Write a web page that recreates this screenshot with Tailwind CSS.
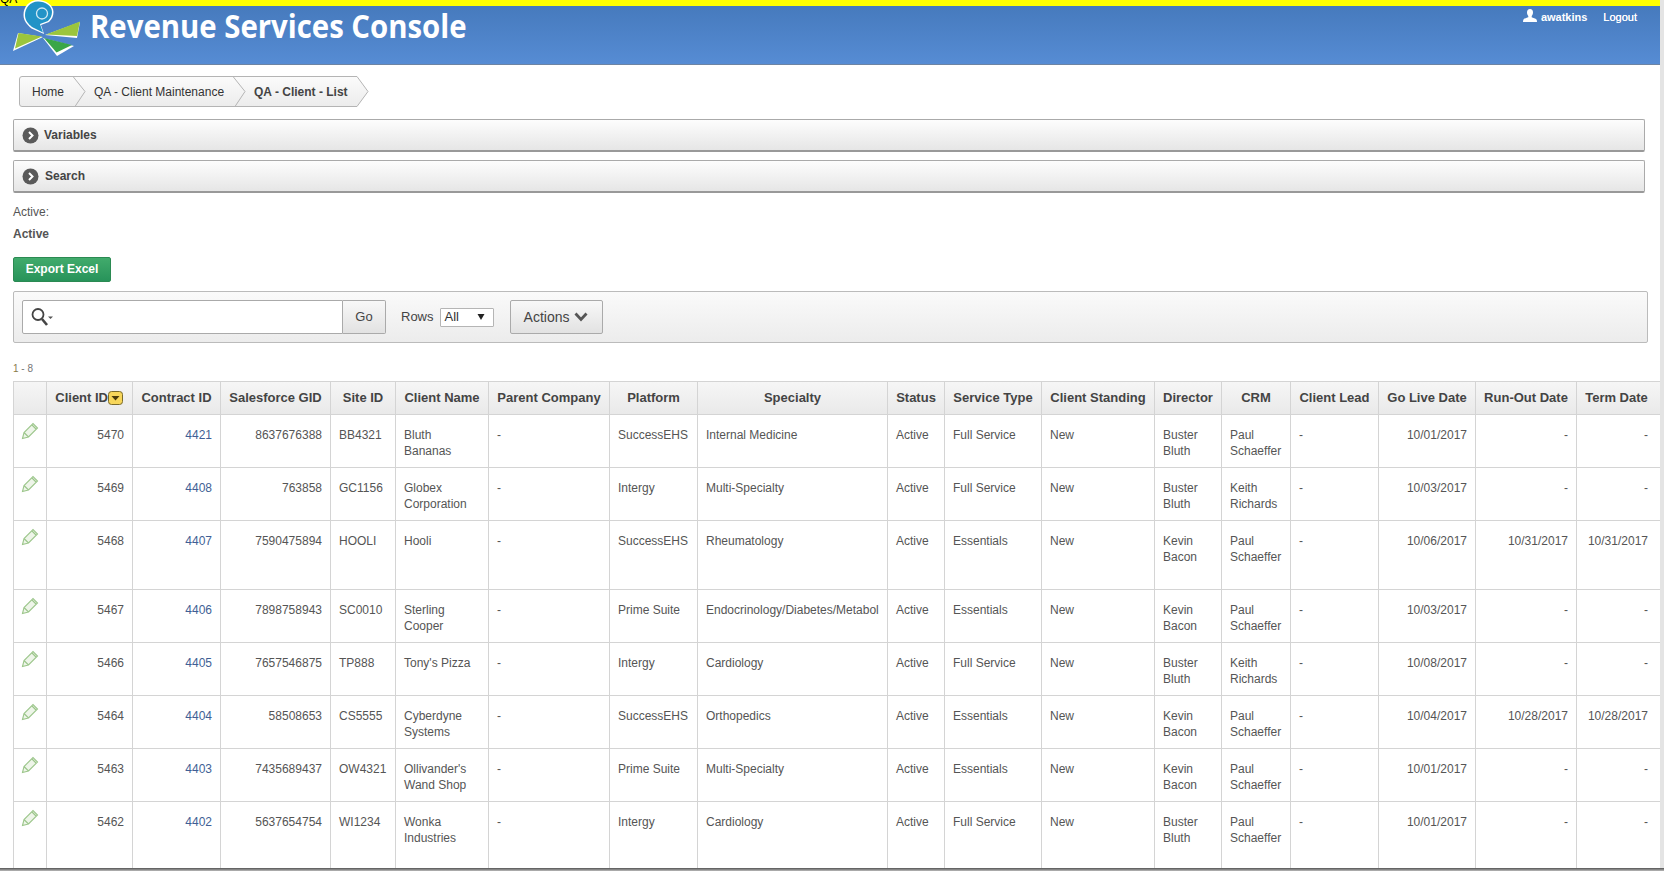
<!DOCTYPE html>
<html><head><meta charset="utf-8"><title>Revenue Services Console</title>
<script src="https://cdn.jsdelivr.net/npm/@tailwindcss/browser@4"></script></head>
<body class="bg-white overflow-hidden font-['Liberation_Sans',Arial,sans-serif] text-[12px] text-[#444]">
<div class="relative flex w-[1664px] h-[871px] overflow-hidden">
<main class="w-[1660px] shrink-0">
  <div class="h-[6px] bg-[#ffff00] overflow-hidden text-black text-[12px] leading-[6px]"><span class="relative top-[-6px] block leading-[10px]">QA</span></div>
  <header class="h-[59px] bg-gradient-to-b from-[#467abd] to-[#568cd4] border-b border-[#6d84a3] flex items-start justify-between pl-[90px] pr-[23px]">
    <h1 class="font-['Open_Sans',sans-serif] font-bold text-white text-[32px] leading-[39px] origin-left scale-x-[0.917]">Revenue Services Console</h1>
    <div class="flex items-center text-white text-[11px] font-bold leading-[12px] mt-[-1px] h-[12px] pt-[11px]">
      <svg class="w-[14px] h-[13px] mr-[4px] mt-[-2px]" viewBox="0 0 14 13" fill="#fff"><path d="M7 0c2 0 3 1.500 3 3.500 0 1.500-.6 2.800-1.300 3.500v1.300c1.200.6 4 1 4.800 2.200.3.500.5 1.500.5 2.500H0c0-1 .2-2 .5-2.500C1.300 9.300 4.100 8.900 5.300 8.300V7C4.600 6.300 4 5 4 3.500 4 1.500 5 0 7 0z"/></svg>
      <span>awatkins</span><span class="ml-[16px] font-normal [text-shadow:0_0_0.5px_#fff]">Logout</span>
    </div>
  </header>

  <nav class="relative ml-[19px] mt-[11px] w-[350px] h-[31px] flex items-center leading-[16px] text-[#333]">
    <svg class="absolute inset-0 w-[350px] h-[31px]" viewBox="0 0 350 31">
      <defs><linearGradient id="bc" x1="0" y1="0" x2="0" y2="1"><stop offset="0" stop-color="#fbfbfb"/><stop offset="1" stop-color="#ececec"/></linearGradient></defs>
      <path d="M3 .5H338L349 15.500 338 30.500H3Q.5 30.500.5 28V3Q.5.500 3 .5Z" fill="url(#bc)" stroke="#b4b4b4"/>
      <path d="M54 .5L66 15.500 56 30.500M214 .5L226 15.500 216 30.500" fill="none" stroke="#b4b4b4"/>
    </svg>
    <span class="relative ml-[13px] w-[62px]">Home</span>
    <span class="relative w-[160px]">QA - Client Maintenance</span>
    <span class="relative font-bold text-[#444]">QA - Client - List</span>
  </nav>

  <section class="ml-[13px] mt-[12px] w-[1632px] h-[33px] flex items-center rounded-[2px] border border-[#aaa] border-b-[2px] border-b-[#999] bg-gradient-to-b from-[#fdfdfd] to-[#e6e6e6] pl-[8px]">
    <svg class="w-[17px] h-[17px] mr-[5px]" viewBox="0 0 17 17"><circle cx="8.500" cy="8.500" r="8" fill="#5a5a5a"/><path d="M7 5l3.500 3.500L7 12" fill="none" stroke="#fff" stroke-width="2"/></svg>
    <span class="font-bold text-[#444] leading-[16px]">Variables</span>
  </section>
  <section class="ml-[13px] mt-[8px] w-[1632px] h-[33px] flex items-center rounded-[2px] border border-[#aaa] border-b-[2px] border-b-[#999] bg-gradient-to-b from-[#fdfdfd] to-[#e6e6e6] pl-[8px]">
    <svg class="w-[17px] h-[17px] mr-[6px]" viewBox="0 0 17 17"><circle cx="8.500" cy="8.500" r="8" fill="#5a5a5a"/><path d="M7 5l3.500 3.500L7 12" fill="none" stroke="#fff" stroke-width="2"/></svg>
    <span class="font-bold text-[#444] leading-[16px]">Search</span>
  </section>

  <p class="ml-[13px] mt-[11px] leading-[16px] text-[#555]">Active:</p>
  <p class="ml-[13px] mt-[6px] leading-[16px] font-bold text-[#555]">Active</p>

  <button class="block ml-[13px] mt-[15px] w-[98px] h-[25px] rounded-[2px] border border-[#2b8a52] bg-gradient-to-b from-[#41ab6c] to-[#27935a] text-white font-bold text-[12px] leading-[23px] text-center">Export Excel</button>

  <div class="ml-[13px] mt-[9px] w-[1635px] h-[52px] flex items-center rounded-[2px] border border-[#bbb] bg-gradient-to-b from-[#fafafa] to-[#ececec] pl-[8px]">
    <div class="flex items-center w-[321px] h-[34px] bg-white border border-[#aaa] rounded-l-[2px] pl-[8px]">
      <svg class="w-[24px] h-[20px]" viewBox="0 0 24 20" fill="none"><circle cx="7" cy="7.500" r="5.500" stroke="#444" stroke-width="1.800"/><path d="M11 12l5 6" stroke="#444" stroke-width="2.600"/><path d="M17 9.500h5l-2.500 2.500z" fill="#555"/></svg>
    </div>
    <button class="w-[43px] h-[34px] border border-l-0 border-[#aaa] rounded-r-[2px] bg-gradient-to-b from-[#f8f8f8] to-[#e2e2e2] text-[#444] text-[13px] font-normal">Go</button>
    <span class="ml-[15px] text-[#444] text-[13px]">Rows</span>
    <div class="ml-[6px] w-[54px] h-[19px] bg-white border border-[#b5b5b5] rounded-[1px] flex items-center justify-between pl-[4px] pr-[8px] text-[13px] text-[#333]"><span>All</span><svg class="w-[8px] h-[6px]" viewBox="0 0 8 6"><path d="M.5 0h7L4 6z" fill="#222"/></svg></div>
    <button class="ml-[16px] w-[93px] h-[34px] flex items-center justify-center gap-[5px] border border-[#aaa] rounded-[2px] bg-gradient-to-b from-[#f8f8f8] to-[#e2e2e2] text-[#444] text-[14px]"><span>Actions</span><svg class="w-[14px] h-[10px]" viewBox="0 0 14 10" fill="none"><path d="M1.500 1.500L7 7.500l5.500-6" stroke="#555" stroke-width="2.800"/></svg></button>
  </div>

  <p class="ml-[13px] mt-[19px] text-[10px] leading-[14px] text-[#777]"><span class="text-[#8a7a4a]">1</span> - 8</p>

  <table class="ml-[13px] mt-[5px] w-[1647px] table-fixed border-collapse text-[12px] leading-[16px] text-[#555] [&_td]:border [&_td]:border-[#d4d4d4] [&_td]:px-[8px] [&_td]:pt-[12px] [&_td]:align-top [&_td]:whitespace-nowrap [&_td]:overflow-hidden [&_td:last-child]:pr-[12px] [&_th]:border [&_th]:border-[#d4d4d4] [&_th]:px-0 [&_th]:font-bold [&_th]:text-[13px] [&_th]:text-[#444] [&_th]:whitespace-nowrap [&_th]:overflow-hidden [&_th:last-child]:pr-[4px] [&_tbody_tr]:h-[53px] [&_tbody_tr:nth-child(3)]:h-[69px]">
    <colgroup><col class="w-[33px]"><col class="w-[86px]"><col class="w-[88px]"><col class="w-[110px]"><col class="w-[65px]"><col class="w-[93px]"><col class="w-[121px]"><col class="w-[88px]"><col class="w-[190px]"><col class="w-[57px]"><col class="w-[97px]"><col class="w-[113px]"><col class="w-[67px]"><col class="w-[69px]"><col class="w-[88px]"><col class="w-[97px]"><col class="w-[101px]"><col class="w-[84px]"></colgroup>
    <thead><tr class="h-[33px] bg-gradient-to-b from-[#f6f6f6] to-[#e9e9e9]">
      <th></th>
      <th><span class="inline-flex items-center justify-end w-full pr-[9px]">Client ID<svg class="w-[15px] h-[14px]" viewBox="0 0 15 14"><rect x=".5" y=".5" width="14" height="13" rx="3" fill="#f7d65a" stroke="#7a6a2a"/><path d="M3.500 5h8L7.500 9.500z" fill="#4a3a0a"/></svg></span></th>
      <th>Contract ID</th><th>Salesforce GID</th><th>Site ID</th><th>Client Name</th><th>Parent Company</th><th>Platform</th><th>Specialty</th><th>Status</th><th>Service Type</th><th>Client Standing</th><th>Director</th><th>CRM</th><th>Client Lead</th><th>Go Live Date</th><th>Run-Out Date</th><th>Term Date</th>
    </tr></thead>
    <tbody>
      <tr><td><svg class="w-[18px] h-[18px] -ml-[1px] -mt-[5px]" viewBox="0 0 18 18" fill="#eef5e9" stroke="#9cc68b" stroke-width="1.100"><path d="M1.500 16.500l1.500-6L12 1.500l4.500 4.500L7.500 15zM3 10.500l4.500 4.500M11 3l4 4"/></svg></td><td class="text-right">5470</td><td class="text-right text-[#3f5f95]">4421</td><td class="text-right">8637676388</td><td>BB4321</td><td>Bluth<br>Bananas</td><td>-</td><td>SuccessEHS</td><td>Internal Medicine</td><td>Active</td><td>Full Service</td><td>New</td><td>Buster<br>Bluth</td><td>Paul<br>Schaeffer</td><td>-</td><td class="text-right">10/01/2017</td><td class="text-right">-</td><td class="text-right">-</td></tr>
      <tr><td><svg class="w-[18px] h-[18px] -ml-[1px] -mt-[5px]" viewBox="0 0 18 18" fill="#eef5e9" stroke="#9cc68b" stroke-width="1.100"><path d="M1.500 16.500l1.500-6L12 1.500l4.500 4.500L7.500 15zM3 10.500l4.500 4.500M11 3l4 4"/></svg></td><td class="text-right">5469</td><td class="text-right text-[#3f5f95]">4408</td><td class="text-right">763858</td><td>GC1156</td><td>Globex<br>Corporation</td><td>-</td><td>Intergy</td><td>Multi-Specialty</td><td>Active</td><td>Full Service</td><td>New</td><td>Buster<br>Bluth</td><td>Keith<br>Richards</td><td>-</td><td class="text-right">10/03/2017</td><td class="text-right">-</td><td class="text-right">-</td></tr>
      <tr><td><svg class="w-[18px] h-[18px] -ml-[1px] -mt-[5px]" viewBox="0 0 18 18" fill="#eef5e9" stroke="#9cc68b" stroke-width="1.100"><path d="M1.500 16.500l1.500-6L12 1.500l4.500 4.500L7.500 15zM3 10.500l4.500 4.500M11 3l4 4"/></svg></td><td class="text-right">5468</td><td class="text-right text-[#3f5f95]">4407</td><td class="text-right">7590475894</td><td>HOOLI</td><td>Hooli</td><td>-</td><td>SuccessEHS</td><td>Rheumatology</td><td>Active</td><td>Essentials</td><td>New</td><td>Kevin<br>Bacon</td><td>Paul<br>Schaeffer</td><td>-</td><td class="text-right">10/06/2017</td><td class="text-right">10/31/2017</td><td class="text-right">10/31/2017</td></tr>
      <tr><td><svg class="w-[18px] h-[18px] -ml-[1px] -mt-[5px]" viewBox="0 0 18 18" fill="#eef5e9" stroke="#9cc68b" stroke-width="1.100"><path d="M1.500 16.500l1.500-6L12 1.500l4.500 4.500L7.500 15zM3 10.500l4.500 4.500M11 3l4 4"/></svg></td><td class="text-right">5467</td><td class="text-right text-[#3f5f95]">4406</td><td class="text-right">7898758943</td><td>SC0010</td><td>Sterling<br>Cooper</td><td>-</td><td>Prime Suite</td><td>Endocrinology/Diabetes/Metabol</td><td>Active</td><td>Essentials</td><td>New</td><td>Kevin<br>Bacon</td><td>Paul<br>Schaeffer</td><td>-</td><td class="text-right">10/03/2017</td><td class="text-right">-</td><td class="text-right">-</td></tr>
      <tr><td><svg class="w-[18px] h-[18px] -ml-[1px] -mt-[5px]" viewBox="0 0 18 18" fill="#eef5e9" stroke="#9cc68b" stroke-width="1.100"><path d="M1.500 16.500l1.500-6L12 1.500l4.500 4.500L7.500 15zM3 10.500l4.500 4.500M11 3l4 4"/></svg></td><td class="text-right">5466</td><td class="text-right text-[#3f5f95]">4405</td><td class="text-right">7657546875</td><td>TP888</td><td>Tony's Pizza</td><td>-</td><td>Intergy</td><td>Cardiology</td><td>Active</td><td>Full Service</td><td>New</td><td>Buster<br>Bluth</td><td>Keith<br>Richards</td><td>-</td><td class="text-right">10/08/2017</td><td class="text-right">-</td><td class="text-right">-</td></tr>
      <tr><td><svg class="w-[18px] h-[18px] -ml-[1px] -mt-[5px]" viewBox="0 0 18 18" fill="#eef5e9" stroke="#9cc68b" stroke-width="1.100"><path d="M1.500 16.500l1.500-6L12 1.500l4.500 4.500L7.500 15zM3 10.500l4.500 4.500M11 3l4 4"/></svg></td><td class="text-right">5464</td><td class="text-right text-[#3f5f95]">4404</td><td class="text-right">58508653</td><td>CS5555</td><td>Cyberdyne<br>Systems</td><td>-</td><td>SuccessEHS</td><td>Orthopedics</td><td>Active</td><td>Essentials</td><td>New</td><td>Kevin<br>Bacon</td><td>Paul<br>Schaeffer</td><td>-</td><td class="text-right">10/04/2017</td><td class="text-right">10/28/2017</td><td class="text-right">10/28/2017</td></tr>
      <tr><td><svg class="w-[18px] h-[18px] -ml-[1px] -mt-[5px]" viewBox="0 0 18 18" fill="#eef5e9" stroke="#9cc68b" stroke-width="1.100"><path d="M1.500 16.500l1.500-6L12 1.500l4.500 4.500L7.500 15zM3 10.500l4.500 4.500M11 3l4 4"/></svg></td><td class="text-right">5463</td><td class="text-right text-[#3f5f95]">4403</td><td class="text-right">7435689437</td><td>OW4321</td><td>Ollivander's<br>Wand Shop</td><td>-</td><td>Prime Suite</td><td>Multi-Specialty</td><td>Active</td><td>Essentials</td><td>New</td><td>Kevin<br>Bacon</td><td>Paul<br>Schaeffer</td><td>-</td><td class="text-right">10/01/2017</td><td class="text-right">-</td><td class="text-right">-</td></tr>
      <tr class="[&_td]:border-b-0"><td><svg class="w-[18px] h-[18px] -ml-[1px] -mt-[5px]" viewBox="0 0 18 18" fill="#eef5e9" stroke="#9cc68b" stroke-width="1.100"><path d="M1.500 16.500l1.500-6L12 1.500l4.500 4.500L7.500 15zM3 10.500l4.500 4.500M11 3l4 4"/></svg></td><td class="text-right">5462</td><td class="text-right text-[#3f5f95]">4402</td><td class="text-right">5637654754</td><td>WI1234</td><td>Wonka<br>Industries</td><td>-</td><td>Intergy</td><td>Cardiology</td><td>Active</td><td>Full Service</td><td>New</td><td>Buster<br>Bluth</td><td>Paul<br>Schaeffer</td><td>-</td><td class="text-right">10/01/2017</td><td class="text-right">-</td><td class="text-right">-</td></tr>
      <tr class="[&_td]:border-t-0"><td></td><td></td><td></td><td></td><td></td><td></td><td></td><td></td><td></td><td></td><td></td><td></td><td></td><td></td><td></td><td></td><td></td><td></td></tr>
    </tbody>
  </table>
</main>
<div class="w-[4px] bg-[#e4e4e4]"></div>

<svg class="absolute left-0 top-0 w-[90px] h-[60px]" viewBox="0 0 90 60">
  <path d="M80 22L45 35 77 38z" fill="#fff"/>
  <path d="M80 21.500L46 34.500 77 36z" fill="#9bc53d"/>
  <path d="M18 33L43 37 13 51z" fill="#fff"/>
  <path d="M18.500 33L42 36.500 15 48.500z" fill="#9bc53d"/>
  <path d="M43 38L74 46 57 56z" fill="#fff"/>
  <path d="M44 38L72 45 56.500 52.500z" fill="#3aa648"/>
  <path d="M38 0C29 0 23.500 7 23.500 15c0 6 4 10 8 13.500L44 34l-3-9 8-3c3-3 4.500-6 4.500-10C53.500 5 46 0 38 0z" fill="#fff"/>
  <path d="M38 1.500C30 1.500 25 8 25 15c0 5.500 3.500 9 7 12L43 32.500 40 24l8-3c2.500-2.500 4-5.500 4-9C52 6 45.500 1.500 38 1.500z" fill="#2293c7"/>
  <circle cx="42" cy="13.500" r="5.500" fill="none" stroke="#cfe8f3" stroke-width="1.300"/>
</svg>
<div class="absolute left-0 right-0 bottom-0 h-[3px] bg-gradient-to-b from-[#555] to-[#bbb]"></div>
</div>
</body></html>
